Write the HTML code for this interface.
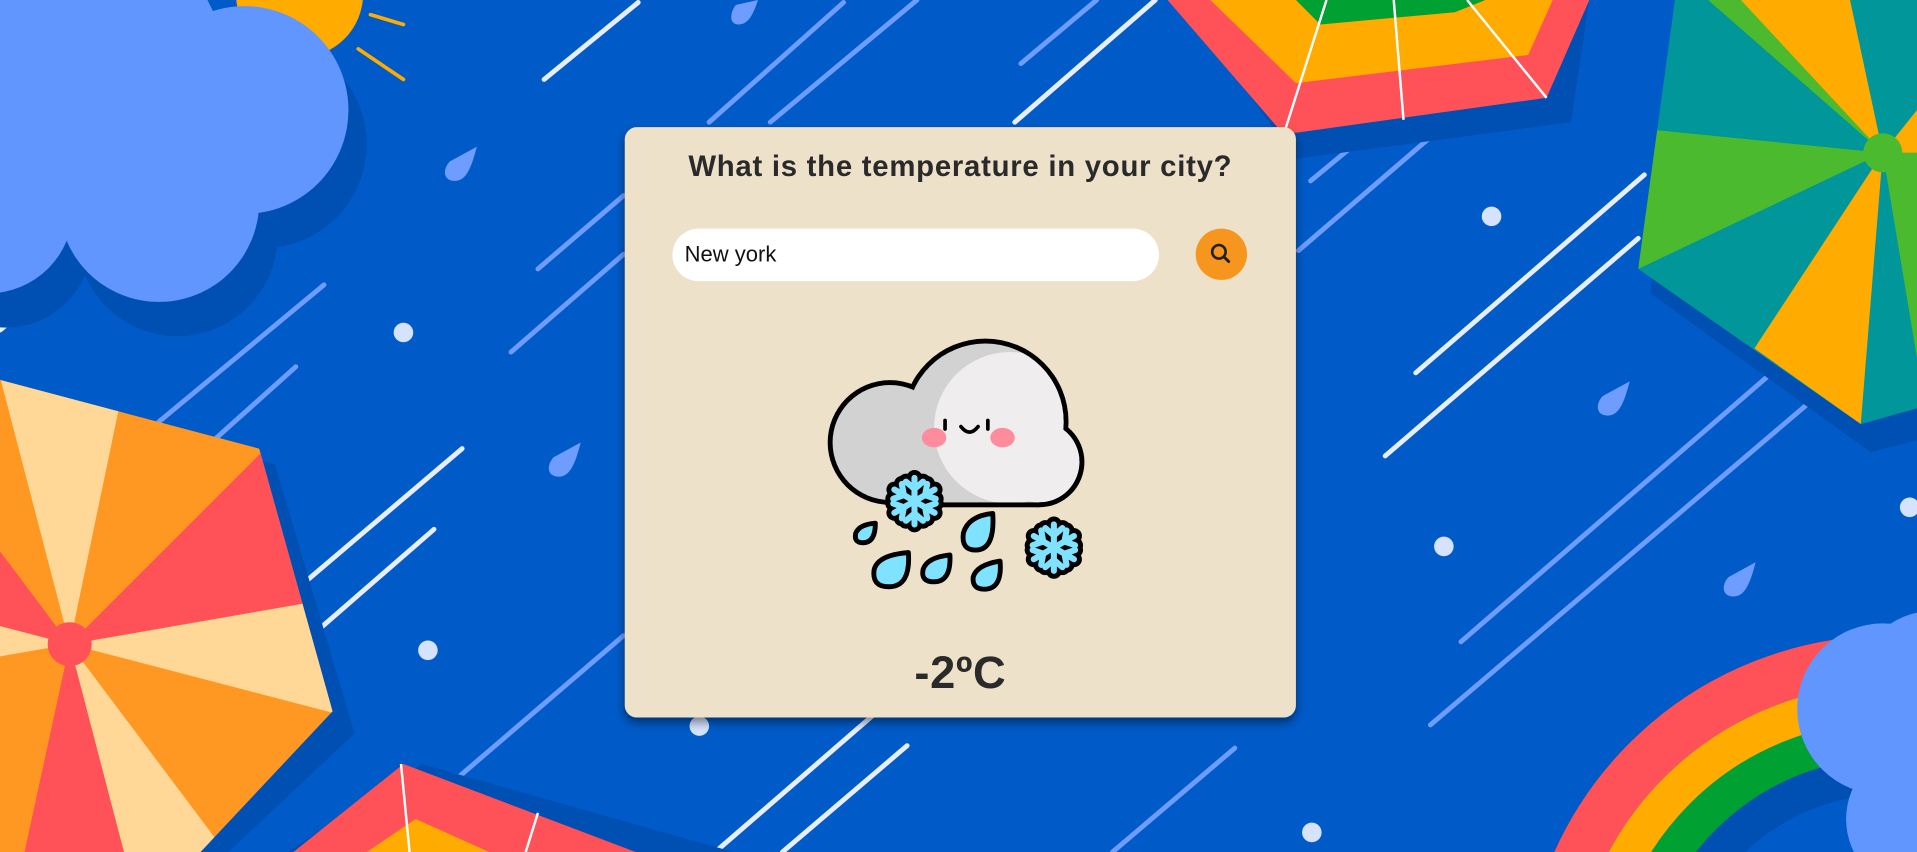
<!DOCTYPE html>
<html><head><meta charset="utf-8"><style>
html,body{margin:0;padding:0;width:1917px;height:852px;overflow:hidden;background:#005BC8}
#w{width:1568px;height:697px;overflow:hidden;transform:scale(1.22258,1.2224);transform-origin:0 0;position:relative;font-family:"Liberation Sans",sans-serif}
svg.bg{position:absolute;left:0;top:0}
.card{position:absolute;left:511px;top:104px;width:549px;height:483px;background:#EEE1CA;border-radius:10px;box-shadow:0 4px 8px rgba(0,0,0,.45)}
.t{position:absolute;left:511px;width:549px;top:123px;text-align:center;font-weight:bold;font-size:24px;letter-spacing:0.6px;color:#2a2a2a}
.in{position:absolute;left:550px;top:187px;width:398px;height:43px;background:#fff;border-radius:22px}
.in span{position:absolute;left:10px;top:11px;font-size:18px;color:#111}
.btn{position:absolute;left:978px;top:187px;width:42px;height:42px;border-radius:50%;background:#F7961F}
.temp{position:absolute;left:511px;width:549px;top:530px;text-align:center;font-weight:bold;font-size:37px;letter-spacing:0.5px;color:#2a2a2a}
</style></head><body><div id="w">
<svg class="bg" width="1568" height="697" viewBox="0 0 1568 697">
<g stroke-linecap="round" stroke-width="4" fill="none">
<g stroke="#E6EEFF">
<line x1="445" y1="65" x2="522" y2="2"/><line x1="830" y1="100" x2="945" y2="0"/><line x1="245" y1="480" x2="378" y2="367"/><line x1="255" y1="520" x2="355" y2="433"/><line x1="1158" y1="305" x2="1345" y2="143"/><line x1="1133" y1="373" x2="1340" y2="195"/><line x1="585" y1="697" x2="720" y2="580"/><line x1="640" y1="697" x2="742" y2="610"/><line x1="0" y1="270" x2="55" y2="225"/>
</g>
<g stroke="#6E9DFF">
<line x1="580" y1="100" x2="690" y2="2"/><line x1="630" y1="100" x2="750" y2="0"/><line x1="835" y1="52" x2="897" y2="0"/><line x1="440" y1="220" x2="510" y2="160"/><line x1="418" y1="288" x2="510" y2="208"/><line x1="130" y1="345" x2="265" y2="233"/><line x1="175" y1="360" x2="242" y2="300"/><line x1="1072" y1="148" x2="1130" y2="100"/><line x1="1062" y1="205" x2="1190" y2="95"/><line x1="1195" y1="525" x2="1455" y2="300"/><line x1="1170" y1="593" x2="1485" y2="325"/><line x1="910" y1="697" x2="1010" y2="612"/><line x1="370" y1="640" x2="510" y2="520"/><line x1="530" y1="570" x2="600" y2="510"/>
</g></g>
<g fill="#D6E3FF"><circle cx="330" cy="272" r="8"/><circle cx="350" cy="532" r="8"/><circle cx="1220" cy="177" r="8"/><circle cx="1181" cy="447" r="8"/><circle cx="572" cy="594" r="8"/><circle cx="1073" cy="681" r="8"/><circle cx="1562" cy="415" r="8"/></g>
<g fill="#6E9DFF">
<path d="M390 120 C386 135 382 148 372 148 C362 148 362 138 368 132 Z"/>
<path d="M475 362 C471 377 467 390 457 390 C447 390 447 380 453 374 Z"/>
<path d="M620 0 C616 12 612 20 604 20 C596 20 597 10 602 4 Z"/>
<path d="M1333 312 C1329 327 1325 340 1315 340 C1305 340 1305 330 1311 324 Z"/>
<path d="M1436 460 C1432 475 1428 488 1418 488 C1408 488 1408 478 1414 472 Z"/>
</g>
<circle cx="245" cy="-5" r="52" fill="#FFAB00"/>
<g stroke="#FFAB00" stroke-width="3" stroke-linecap="round"><line x1="303" y1="12" x2="330" y2="20"/><line x1="293" y1="40" x2="330" y2="65"/></g>
<g fill="#0050B4" transform="translate(15,28)"><circle cx="200" cy="90" r="85"/><circle cx="130" cy="165" r="82"/><circle cx="60" cy="60" r="125"/><circle cx="-10" cy="170" r="70"/></g>
<g fill="#6196FF"><circle cx="200" cy="90" r="85"/><circle cx="130" cy="165" r="82"/><circle cx="60" cy="60" r="125"/><circle cx="-10" cy="170" r="70"/></g>
<polygon points="15,320 225,380 290,600 120,760 -100,700 -160,480" fill="#0050B4"/>
<g transform="translate(57,527)">
<clipPath id="c1"><polygon points="-60,-217 155,-160 215,55 60,220 -160,160 -220,-55"/></clipPath>
<g clip-path="url(#c1)">
<rect x="-250" y="-250" width="500" height="500" fill="#FF9822"/>
<path d="M0 0 L-60 -230 L48 -230Z M0 0 L230 -40 L230 60Z M0 0 L150 200 L60 230Z M0 0 L-230 40 L-230 -60Z" fill="#FFD796"/>
<path d="M0 0 L160 -160 L230 -40Z M0 0 L60 230 L-50 230Z M0 0 L-150 -200 L-230 -60Z" fill="#FF5258"/>
</g>
<circle r="18" fill="#FF5258"/></g>
<polygon points="965,0 1300,0 1285,100 1060,130" fill="#0050B4"/>
<polygon points="955,0 1300,0 1265,80 1050,110" fill="#FF5258"/>
<polygon points="990,0 1270,0 1250,45 1060,68" fill="#FFAB00"/>
<polygon points="1060,0 1215,0 1190,10 1080,20" fill="#00A032"/>
<g stroke="#fff" stroke-width="2"><line x1="1050" y1="110" x2="1085" y2="0"/><line x1="1148" y1="98" x2="1140" y2="0"/><line x1="1265" y1="80" x2="1200" y2="0"/></g>
<polygon points="1350,240 1530,370 1568,360 1568,0 1370,0" fill="#0050B4"/>
<g transform="translate(1540,125)">
<clipPath id="c2"><polygon points="-180,-140 -170,-125 -200,95 -18,222 60,200 60,-140"/></clipPath>
<g clip-path="url(#c2)"><rect x="-220" y="-140" width="300" height="380" fill="#00969A"/>
<path d="M0 0 L-200 -20 L-200 95Z M0 0 L-160 -140 L-80 -140Z M0 0 L40 240 L80 240 L80 0Z" fill="#4CBA2E"/>
<path d="M0 0 L-130 -140 L-30 -140Z M0 0 L-105 160 L-18 222Z M0 0 L80 -100 L80 0Z" fill="#FFAB00"/></g>
<circle r="16" fill="#4CBA2E"/></g>
<g fill="none" stroke-width="30">
<circle cx="1545" cy="820" r="280" stroke="#FF5258" stroke-width="40"/>
<circle cx="1545" cy="820" r="245" stroke="#FFAB00"/>
<circle cx="1545" cy="820" r="215" stroke="#00A032"/>
<circle cx="1545" cy="820" r="185" stroke="#0050B4"/>
</g>
<g fill="#6196FF"><circle cx="1540" cy="580" r="70"/><circle cx="1580" cy="560" r="60"/><circle cx="1570" cy="670" r="60"/></g>
<polygon points="235,697 345,625 600,697" fill="#0050B4"/>
<polygon points="240,697 330,625 520,697" fill="#FF5258"/>
<polygon points="300,697 340,670 400,697" fill="#FFAB00"/>
<g stroke="#fff" stroke-width="2"><line x1="328" y1="625" x2="335" y2="697"/><line x1="440" y1="665" x2="430" y2="697"/></g>
</svg>
<div class="card"></div>
<div class="t">What is the temperature in your city?</div>
<div class="in"><span>New york</span></div>
<div class="btn"><svg width="42" height="42" viewBox="0 0 42 42"><circle cx="19" cy="19" r="5.5" fill="none" stroke="#222" stroke-width="2.2"/><line x1="23" y1="23" x2="27" y2="27" stroke="#222" stroke-width="2.4" stroke-linecap="round"/></svg></div>
<svg class="bg" width="1568" height="697" viewBox="0 0 1568 697">
<defs><g id="sf"><g stroke-linecap="round" stroke-linejoin="round" fill="none"><path id="arm" d="M0 -19 V19 M-7 -16 L0 -10 L7 -16 M-7 16 L0 10 L7 16"/><use href="#arm" transform="rotate(60)"/><use href="#arm" transform="rotate(120)"/></g></g></defs>
<g fill="#000"><circle cx="728" cy="362" r="51"/><circle cx="806" cy="345" r="68"/><circle cx="850" cy="378" r="37"/><rect x="728" y="350" width="122" height="65"/></g>
<g fill="#D2D2D2"><circle cx="728" cy="362" r="47"/><circle cx="806" cy="345" r="64"/><rect x="728" y="350" width="122" height="61"/></g>
<clipPath id="cc"><circle cx="728" cy="362" r="47"/><circle cx="806" cy="345" r="64"/><circle cx="850" cy="378" r="33"/><rect x="728" y="350" width="122" height="61"/></clipPath>
<g clip-path="url(#cc)" fill="#EFEDED"><circle cx="826" cy="350" r="62"/><circle cx="850" cy="378" r="33"/></g>
<g stroke="#000" stroke-width="3" stroke-linecap="round" fill="none"><line x1="773" y1="344" x2="773" y2="351"/><line x1="808" y1="344" x2="808" y2="351"/><path d="M786 349 Q793 358 800 349"/></g>
<g fill="#FF8C9C"><ellipse cx="764" cy="358" rx="10" ry="8"/><ellipse cx="820" cy="358" rx="10" ry="8"/></g>
<g transform="translate(748,410)"><use href="#sf" stroke="#000" stroke-width="13"/><use href="#sf" stroke="#7FE3FF" stroke-width="5"/></g>
<g transform="translate(862,448)"><use href="#sf" stroke="#000" stroke-width="13"/><use href="#sf" stroke="#7FE3FF" stroke-width="5"/></g>
<g fill="#7FE3FF" stroke="#000" stroke-width="4" stroke-linejoin="round">
<path d="M716 428 Q716 444 706 444 Q698 444 700 436 Q703 429 716 428Z"/>
<path d="M812 420 Q814 450 798 450 Q786 450 788 436 Q792 422 812 420Z"/>
<path d="M743 452 Q745 480 727 480 Q713 480 715 466 Q718 454 743 452Z"/>
<path d="M777 454 Q778 476 764 476 Q753 476 755 466 Q758 456 777 454Z"/>
<path d="M818 459 Q820 482 805 482 Q795 482 796 472 Q799 462 818 459Z"/>
</g>
</svg>
<div class="temp">-2ºC</div>
</div></body></html>
